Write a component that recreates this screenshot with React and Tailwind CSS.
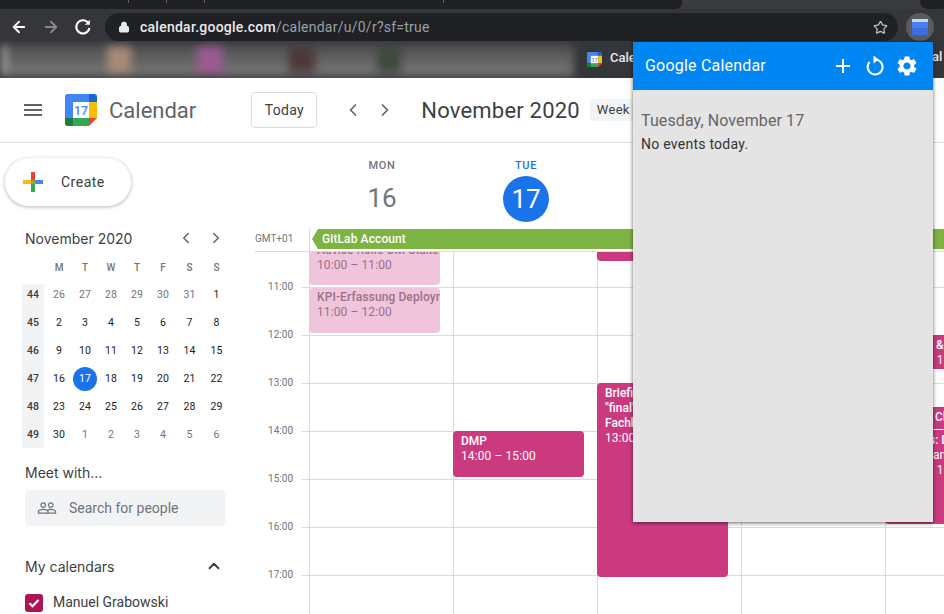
import React from "react";
import { ArrowLeft, ArrowRight, ChevronLeft, ChevronRight, ChevronUp, Lock, Star } from "lucide-react";

const GEAR = "M19.14 12.94c.04-.3.06-.61.06-.94 0-.32-.02-.64-.07-.94l2.03-1.58c.18-.14.23-.41.12-.61l-1.92-3.32c-.12-.22-.37-.29-.59-.22l-2.39.96c-.5-.38-1.03-.7-1.62-.94l-.36-2.54c-.04-.24-.24-.41-.48-.41h-3.84c-.24 0-.43.17-.47.41l-.36 2.54c-.59.24-1.13.57-1.62.94l-2.39-.96c-.22-.08-.47 0-.59.22L2.74 8.87c-.12.21-.08.47.12.61l2.03 1.58c-.05.3-.09.63-.09.94s.02.64.07.94l-2.03 1.58c-.18.14-.23.41-.12.61l1.92 3.32c.12.22.37.29.59.22l2.39-.96c.5.38 1.03.7 1.62.94l.36 2.54c.05.24.24.41.48.41h3.84c.24 0 .44-.17.47-.41l.36-2.54c.59-.24 1.13-.56 1.62-.94l2.39.96c.22.08.47 0 .59-.22l1.92-3.32c.12-.22.07-.47-.12-.61l-2.01-1.58zM12 15.6c-1.98 0-3.6-1.62-3.6-3.6s1.62-3.6 3.6-3.6 3.6 1.62 3.6 3.6-1.62 3.6-3.6 3.6z";
const PEOPLE = "M16.5 13c-1.2 0-3.07.34-4.5 1-1.43-.67-3.3-1-4.5-1C5.33 13 1 14.08 1 16.25V19h22v-2.75c0-2.17-4.33-3.25-6.5-3.25zm-4 4.5h-10v-1.25c0-.54 2.56-1.75 5-1.75s5 1.21 5 1.75v1.25zm9 0H14v-1.25c0-.46-.2-.86-.52-1.22.88-.3 1.96-.53 3.02-.53 2.44 0 5 1.21 5 1.75v1.25zM7.5 12c1.93 0 3.5-1.57 3.5-3.5S9.43 5 7.5 5 4 6.57 4 8.5 5.57 12 7.5 12zm0-5.5c1.1 0 2 .9 2 2s-.9 2-2 2-2-.9-2-2 .9-2 2-2zm9 5.5c1.93 0 3.5-1.57 3.5-3.5S18.43 5 16.5 5 13 6.57 13 8.5s1.57 3.5 3.5 3.5zm0-5.5c1.1 0 2 .9 2 2s-.9 2-2 2-2-.9-2-2 .9-2 2-2z";

function Logo({ size, fs }) {
  return (
    <svg width={size} height={size} viewBox="0 0 36 36" className="shrink-0">
      <path d="M3 0h24v9H9v18H0V3a3 3 0 0 1 3-3z" fill="#4285f4" />
      <path d="M27 0h6a3 3 0 0 1 3 3v6h-9z" fill="#1967d2" />
      <path d="M27 9h9v18h-9z" fill="#fbbc04" />
      <path d="M9 27h18v9H9z" fill="#34a853" />
      <path d="M0 27h9v9H3a3 3 0 0 1-3-3z" fill="#188038" />
      <path d="M27 27h9l-9 9z" fill="#ea4335" />
      <path d="M9 9h18v18H9z" fill="#fff" />
      <text x="18" y="24" textAnchor="middle" fontSize={fs} fontWeight="500" fill="#4285f4" fontFamily="Roboto, sans-serif">17</text>
    </svg>
  );
}

const weeks = [
  ["44", [["26", 1], ["27", 1], ["28", 1], ["29", 1], ["30", 1], ["31", 1], ["1"]]],
  ["45", [["2"], ["3"], ["4"], ["5"], ["6"], ["7"], ["8"]]],
  ["46", [["9"], ["10"], ["11"], ["12"], ["13"], ["14"], ["15"]]],
  ["47", [["16"], ["17", 2], ["18"], ["19"], ["20"], ["21"], ["22"]]],
  ["48", [["23"], ["24"], ["25"], ["26"], ["27"], ["28"], ["29"]]],
  ["49", [["30"], ["1", 1], ["2", 1], ["3", 1], ["4", 1], ["5", 1], ["6", 1]]],
];

function Sidebar() {
  return (
    <aside className="w-[250px] shrink-0 flex flex-col pt-[15px] font-['Roboto',sans-serif]">
      <div className="ml-[5px] w-[126px] h-[48px] rounded-full bg-white shadow-[0_1px_3px_1px_rgba(60,64,67,0.25)] flex items-center">
        <svg width="24" height="24" viewBox="0 0 24 24" className="ml-4">
          <path d="M10 2h4v8h-4z" fill="#ea4335" />
          <path d="M14 10h8v4h-8z" fill="#4285f4" />
          <path d="M10 14h4v8h-4z" fill="#34a853" />
          <path d="M2 10h8v4H2z" fill="#fbbc04" />
          <path d="M10 10h4v4h-4z" fill="#a0a040" />
        </svg>
        <span className="ml-4 text-[14px] tracking-[0.5px] text-[#3c4043]">Create</span>
      </div>

      <div className="mt-[20px] h-[24px] flex items-center pl-[25px] w-[225px]">
        <span className="font-['Inter',sans-serif] text-[14px] text-[#3c4043]">November 2020</span>
        <ChevronLeft size={18} strokeWidth={2} className="ml-auto text-[#5f6368]" />
        <ChevronRight size={18} strokeWidth={2} className="ml-[12px] text-[#5f6368]" />
      </div>

      <div className="ml-[22px] mt-[4px] w-[210px] relative">
        <div className="grid grid-cols-[24px_26px_26px_26px_26px_26px_27px_27px] h-[27px] items-center text-[10px] text-center font-medium text-[#70757a]">
          <span />
          {["M", "T", "W", "T", "F", "S", "S"].map((d, i) => <span key={i}>{d}</span>)}
        </div>
        <div className="bg-[#f1f3f4] rounded-[2px] w-[22px] h-[164px] absolute left-0 top-[30px]" />
        {weeks.map(([w, days]) => (
          <div key={w} className="relative grid grid-cols-[24px_26px_26px_26px_26px_26px_27px_27px] h-[28px] items-center text-center text-[10.5px]">
            <span className="w-[22px] text-[#3c4043] font-medium">{w}</span>
            {days.map(([d, k], i) => (
              k === 2
                ? <span key={i} className="mx-auto w-6 h-6 rounded-full bg-[#1a73e8] text-white flex items-center justify-center">{d}</span>
                : <span key={i} className={k ? "text-[#70757a]" : "text-[#202124]"}>{d}</span>
            ))}
          </div>
        ))}
      </div>

      <div className="ml-[25px] mt-[13px] h-[20px] flex items-center font-['Inter',sans-serif] text-[14px] text-[#3c4043]">Meet with...</div>
      <div className="ml-[25px] mt-[8px] w-[200px] h-[36px] rounded-[4px] bg-[#f1f3f4] flex items-center">
        <svg width="20" height="20" viewBox="0 0 24 24" className="ml-[12px]" fill="#70757a"><path d={PEOPLE} /></svg>
        <span className="ml-[12px] text-[14px] text-[#70757a]">Search for people</span>
      </div>
      <div className="ml-[25px] mt-[30px] w-[200px] h-[20px] flex items-center justify-between">
        <span className="font-['Inter',sans-serif] text-[14px] text-[#3c4043]">My calendars</span>
        <ChevronUp size={18} strokeWidth={2.5} className="text-[#3c4043] mr-[2px]" />
      </div>
      <div className="ml-[25px] mt-[16px] flex items-center">
        <span className="w-[18px] h-[18px] rounded-[3px] bg-[#ad1457] flex items-center justify-center">
          <svg width="14" height="14" viewBox="0 0 14 14" fill="none" stroke="#fff" strokeWidth="2.2"><path d="M2.5 7.2l3 3 6-6.2" /></svg>
        </span>
        <span className="ml-[10px] text-[14px] text-[#3c4043]">Manuel Grabowski</span>
      </div>
    </aside>
  );
}

function Event({ className, children }) {
  return (
    <div className={"absolute rounded-[4px] overflow-hidden px-2 text-[12px] leading-[15px] font-['Roboto',sans-serif] " + className}>
      {children}
    </div>
  );
}

function Grid() {
  const hours = ["11:00", "12:00", "13:00", "14:00", "15:00", "16:00", "17:00"];
  return (
    <section className="flex-1 min-w-0 flex flex-col font-['Roboto',sans-serif]">
      {/* day heads */}
      <div className="h-[85px] flex pl-[60px] shrink-0">
        <div className="w-[144px] flex flex-col items-center pt-[16px]">
          <span className="text-[11px] leading-[14px] font-medium tracking-[0.6px] text-[#70757a]">MON</span>
          <span className="mt-[2px] h-[46px] flex items-center text-[26px] text-[#70757a]">16</span>
        </div>
        <div className="w-[144px] flex flex-col items-center pt-[16px]">
          <span className="text-[11px] leading-[14px] font-medium tracking-[0.6px] text-[#1a73e8]">TUE</span>
          <span className="mt-[3px] w-[46px] h-[46px] rounded-full bg-[#1a73e8] text-white flex items-center justify-center text-[26px]">17</span>
        </div>
      </div>
      {/* all day */}
      <div className="h-[23px] flex shrink-0 relative">
        <div className="w-[59px] text-[10px] leading-[21px] text-[#70757a] pl-[5px]">GMT+01</div>
        <div className="flex-1 border-l border-[#dadce0] pl-[2px] pt-[1px]">
          <div className="h-[20px] bg-[#7cb342] text-white text-[12px] leading-[20px] font-medium tracking-[0.1px] pl-[10px] [clip-path:polygon(6px_0,100%_0,100%_100%,6px_100%,0_50%)]">GitLab Account</div>
        </div>
      </div>
      {/* hours */}
      <div className="flex-1 relative overflow-hidden border-t border-[#dadce0] ml-[5px]">
        <div className="absolute left-[54px] top-0 bottom-0 right-0 flex">
          {[0, 1, 2, 3, 4].map((i) => (
            <div key={i} className="w-[144px] shrink-0 h-full border-l border-[#dadce0]" />
          ))}
        </div>
        <div className="h-[35px]" />
        {hours.map((h) => (
          <div key={h} className="h-[48px] relative border-t border-[#dadce0] ml-[47px]">
            <span className="absolute -left-[47px] -top-[8px] w-[38px] text-right text-[10px] leading-[14px] text-[#70757a]">{h}</span>
          </div>
        ))}
        <Event className="left-[54px] top-[-35px] w-[131px] h-[68px] bg-[#f0c4da] text-[#9a7288] pt-[26px]">
          <div className="font-medium whitespace-nowrap">Advice Rolle OM Stake</div>
          <div className="tracking-[0.1px]">10:00 – 11:00</div>
        </Event>
        <Event className="left-[54px] top-[36px] w-[131px] h-[45px] bg-[#f0c4da] text-[#9a7288] pt-[2px]">
          <div className="font-medium whitespace-nowrap tracking-[0.1px]">KPI-Erfassung Deployment</div>
          <div className="tracking-[0.1px]">11:00 – 12:00</div>
        </Event>
        <Event className="left-[198px] top-[179px] w-[131px] h-[46px] bg-[#cb3a7f] text-white pt-[3px]">
          <div className="font-medium">DMP</div>
          <div className="tracking-[0.1px]">14:00 – 15:00</div>
        </Event>
        <Event className="left-[342px] top-[-20px] w-[131px] h-[29px] bg-[#cb3a7f]" />
        <Event className="left-[342px] top-[131px] w-[131px] h-[194px] bg-[#cb3a7f] text-white pt-[3px]">
          <div className="font-medium">Briefing</div>
          <div className="font-medium">"final"</div>
          <div className="font-medium">Fachkonzept</div>
          <div className="tracking-[0.1px]">13:00 – 17:00</div>
        </Event>
        <Event className="left-[630px] top-[83px] w-[80px] h-[34px] bg-[#cb3a7f] text-white pt-[3px]">
          <div className="font-medium whitespace-nowrap pl-[43px]">&amp; A</div>
          <div className="whitespace-nowrap pl-[33px]">– 1</div>
        </Event>
        <Event className="left-[630px] top-[155px] w-[80px] h-[22px] bg-[#cb3a7f] text-white pt-[3px]">
          <div className="font-medium whitespace-nowrap pl-[42px]">Cl</div>
        </Event>
        <Event className="left-[630px] top-[178px] w-[80px] h-[94px] bg-[#cb3a7f] text-white pt-[3px]">
          <div className="font-medium whitespace-nowrap pl-[36px]">s: D</div>
          <div className="whitespace-nowrap pl-[40px]">an</div>
          <div className="whitespace-nowrap pl-[33px]">– 1</div>
        </Event>
      </div>
    </section>
  );
}

function Popup() {
  return (
    <div className="absolute left-[633px] top-[42px] w-[300px] h-[480px] bg-[#e4e4e4] shadow-[0_1px_4px_rgba(0,0,0,0.6)] font-['Roboto',sans-serif] flex flex-col">
      <div className="h-[48px] bg-[#0086f2] flex items-center pl-[12px] text-white shrink-0">
        <span className="w-[190px] shrink-0 text-[16px] tracking-[0.2px] whitespace-nowrap">Google Calendar</span>
        <svg width="16" height="16" viewBox="0 0 16 16" stroke="#fff" strokeWidth="2" fill="none"><path d="M8 1v14M1 8h14" /></svg>
        <svg width="20" height="22" viewBox="0 0 20 22" className="ml-[14px]" fill="none" stroke="#fff" strokeWidth="2">
          <path d="M4.5 7A7.5 7.5 0 1 0 9.5 4.5" />
          <path d="M8.5 0.5l5 4-5 4z" fill="#fff" stroke="none" />
        </svg>
        <svg width="24" height="24" viewBox="0 0 24 24" fill="#fff" className="ml-[10px]"><path d={GEAR} /></svg>
      </div>
      <div className="px-[8px] pt-[21px]">
        <div className="text-[16px] leading-[20px] tracking-[0.1px] text-[#666666]">Tuesday, November 17</div>
        <div className="mt-[4px] text-[14px] leading-[18px] tracking-[0.25px] text-[#333333]">No events today.</div>
      </div>
    </div>
  );
}

export default function App() {
  return (
    <div className="relative w-[944px] h-[614px] overflow-hidden bg-white flex flex-col font-['Roboto',sans-serif]">
      {/* tab strip */}
      <div className="h-[9px] bg-[#3a3b3f] flex shrink-0">
        <div className="w-[682px] bg-[#202124] rounded-br-[6px] flex">
          <span className="ml-[128px] w-px h-[3px] bg-[#666]" />
          <span className="ml-[37px] w-px h-[3px] bg-[#666]" />
          <span className="ml-[37px] w-px h-[3px] bg-[#666]" />
          <span className="ml-[238px] w-px h-[3px] bg-[#666]" />
        </div>
        <div className="ml-auto w-[24px] bg-[#202124] rounded-bl-[8px]" />
      </div>
      {/* toolbar */}
      <div className="h-[32px] pt-[4px] bg-[#35363a] flex items-center shrink-0 relative">
        <ArrowLeft size={18} strokeWidth={2.4} className="ml-[10px] text-white" />
        <ArrowRight size={18} strokeWidth={2.4} className="ml-[14px] text-[#8a8b8e]" />
        <svg width="18" height="18" viewBox="0 0 18 18" className="ml-[14px]" fill="none" stroke="#fff" strokeWidth="2">
          <path d="M14.6 5.5A6.6 6.6 0 1 0 15.4 10" />
          <path d="M15.8 1.8v5h-5z" fill="#fff" stroke="none" />
        </svg>
        <div className="ml-[13px] w-[793px] h-[28px] rounded-full bg-[#202124] flex items-center">
          <Lock size={12} fill="#e8eaed" strokeWidth={2} className="ml-[13px] text-[#e8eaed]" />
          <span className="ml-[10px] text-[14px] tracking-[0.25px] font-medium text-[#e8eaed]">calendar.google.com</span>
          <span className="text-[14px] tracking-[0.25px] text-[#9aa0a6]">/calendar/u/0/r?sf=true</span>
          <Star size={15} strokeWidth={2} className="ml-auto mr-[10px] text-[#bdc1c6]" />
        </div>
        <div className="ml-[8px] w-[28px] h-[28px] rounded-full bg-[#5a5b5f] flex items-center justify-center">
          <div className="w-[16px] h-[16px] bg-[#3b6fe0] flex flex-col">
            <div className="h-[3px] bg-[#c9d4ee]" />
            <div className="h-[6px] bg-[#4a7ef0]" />
          </div>
        </div>
      </div>
      {/* bookmarks */}
      <div className="h-[37px] bg-[#35363a] flex items-center relative shrink-0 overflow-hidden">
        <div className="w-[574px] h-[32px] bg-gradient-to-b from-[#4c4c4d] to-[#7a7a7a] blur-[4px] flex items-center shrink-0 mr-[4px]">
          <span className="ml-[2px] w-[5px] h-[28px] bg-[#a8a8a8]" />
          <span className="ml-[100px] w-[24px] h-[28px] bg-[#a58a78]" />
          <span className="ml-[66px] w-[26px] h-[28px] bg-[#9a5a90]" />
          <span className="ml-[66px] w-[26px] h-[24px] bg-[#4e3838]" />
          <span className="ml-[62px] w-[24px] h-[24px] bg-[#3e4a3e]" />
        </div>
        <span className="ml-[9px] -mt-[1px]"><Logo size={15} fs={14} /></span>
        <span className="ml-[8px] -mt-[3px] text-[13px] font-medium text-[#e8eaed] whitespace-nowrap">Calendar</span>
        <span className="absolute left-[932px] top-[6px] text-[13px] font-medium text-[#e8eaed]">al</span>
      </div>
      {/* app header */}
      <header className="h-[65px] border-b border-[#dadce0] flex items-center shrink-0 bg-white">
        <div className="ml-[24px] w-[18px] flex flex-col gap-[3px]">
          <span className="h-[2px] bg-[#5f6368]" />
          <span className="h-[2px] bg-[#5f6368]" />
          <span className="h-[2px] bg-[#5f6368]" />
        </div>
        <span className="ml-[23px]"><Logo size={32} fs={14} /></span>
        <span className="ml-[12px] text-[22px] text-[#5f6368]">Calendar</span>
        <div className="ml-[55px] w-[66px] h-[36px] rounded-[4px] border border-[#dadce0] flex items-center justify-center text-[14px] tracking-[0.3px] text-[#3c4043]">Today</div>
        <ChevronLeft size={20} strokeWidth={2} className="ml-[26px] text-[#5f6368]" />
        <ChevronRight size={20} strokeWidth={2} className="ml-[12px] text-[#5f6368]" />
        <span className="ml-[26px] text-[22px] tracking-[0.2px] text-[#3c4043] whitespace-nowrap">November 2020</span>
        <div className="ml-[10px] h-[22px] w-[60px] shrink-0 rounded-[4px] bg-[#f1f3f4] pl-[7px] text-[13px] tracking-[0.3px] leading-[22px] text-[#3c4043]">Week</div>
      </header>
      <main className="flex-1 flex min-h-0">
        <Sidebar />
        <Grid />
      </main>
      <Popup />
    </div>
  );
}
